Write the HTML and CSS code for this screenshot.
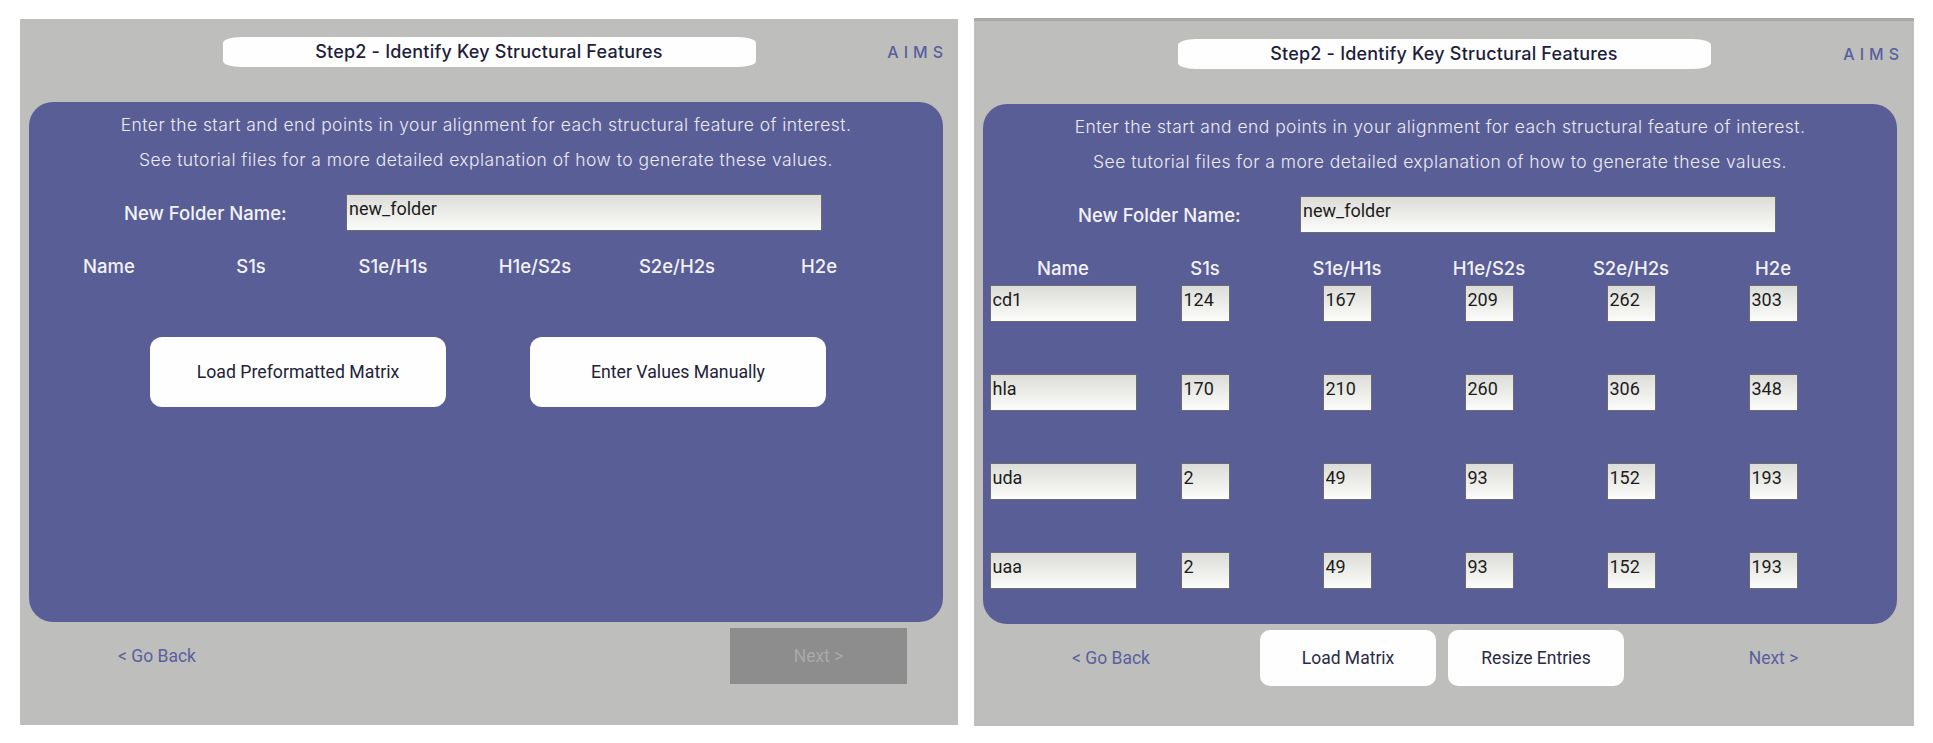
FILE: index.html
```html
<!DOCTYPE html>
<html lang="en">
  <head>
    <meta charset="UTF-8" />
    <meta name="viewport" content="width=device-width, initial-scale=1.0" />
    <title>AIMS - Step 2</title>
    <link rel="stylesheet" href="styles.css">
  </head>
  <body>
    <main class="screens">
      <!-- first state: nothing loaded yet -->
      <section class="screen">
        <header class="screen-top">
          <div class="step-title">Step2 - Identify Key Structural Features</div>
          <span class="brand">AIMS</span>
        </header>

        <div class="card">
          <p class="intro">Enter the start and end points in your alignment for each structural feature of interest.</p>
          <p class="intro">See tutorial files for a more detailed explanation of how to generate these values.</p>

          <div class="folder-row">
            <label for="folder1">New Folder Name:</label>
            <input class="field folder-field" type="text" id="folder1" value="new_folder" />
          </div>

          <div class="cols">
            <span>Name</span>
            <span>S1s</span>
            <span>S1e/H1s</span>
            <span>H1e/S2s</span>
            <span>S2e/H2s</span>
            <span>H2e</span>
          </div>

          <div class="choices">
            <button type="button" class="choice">Load Preformatted Matrix</button>
            <button type="button" class="choice">Enter Values Manually</button>
          </div>
        </div>

        <footer class="screen-foot">
          <a class="back-link" href="#">&lt; Go Back</a>
          <button type="button" class="next-btn" disabled>Next &gt;</button>
        </footer>
      </section>

      <!-- second state: matrix loaded -->
      <section class="screen screen-loaded">
        <header class="screen-top">
          <div class="step-title">Step2 - Identify Key Structural Features</div>
          <span class="brand">AIMS</span>
        </header>

        <div class="card">
          <p class="intro">Enter the start and end points in your alignment for each structural feature of interest.</p>
          <p class="intro">See tutorial files for a more detailed explanation of how to generate these values.</p>

          <div class="folder-row">
            <label for="folder2">New Folder Name:</label>
            <input class="field folder-field" type="text" id="folder2" value="new_folder" />
          </div>

          <div class="cols">
            <span>Name</span>
            <span>S1s</span>
            <span>S1e/H1s</span>
            <span>H1e/S2s</span>
            <span>S2e/H2s</span>
            <span>H2e</span>
          </div>

          <div class="rows">
            <input class="field name-field" type="text" value="cd1" />
            <input class="field num-field" type="text" value="124" />
            <input class="field num-field" type="text" value="167" />
            <input class="field num-field" type="text" value="209" />
            <input class="field num-field" type="text" value="262" />
            <input class="field num-field" type="text" value="303" />

            <input class="field name-field" type="text" value="hla" />
            <input class="field num-field" type="text" value="170" />
            <input class="field num-field" type="text" value="210" />
            <input class="field num-field" type="text" value="260" />
            <input class="field num-field" type="text" value="306" />
            <input class="field num-field" type="text" value="348" />

            <input class="field name-field" type="text" value="uda" />
            <input class="field num-field" type="text" value="2" />
            <input class="field num-field" type="text" value="49" />
            <input class="field num-field" type="text" value="93" />
            <input class="field num-field" type="text" value="152" />
            <input class="field num-field" type="text" value="193" />

            <input class="field name-field" type="text" value="uaa" />
            <input class="field num-field" type="text" value="2" />
            <input class="field num-field" type="text" value="49" />
            <input class="field num-field" type="text" value="93" />
            <input class="field num-field" type="text" value="152" />
            <input class="field num-field" type="text" value="193" />
          </div>
        </div>

        <footer class="screen-foot">
          <a class="back-link" href="#">&lt; Go Back</a>
          <button type="button" class="foot-btn">Load Matrix</button>
          <button type="button" class="foot-btn">Resize Entries</button>
          <a class="next-link" href="#">Next &gt;</a>
        </footer>
      </section>
    </main>
  </body>
</html>
```

FILE: styles.css
```css
body {
  margin: 0;
  background: #ffffff;
  font-family: Inter, "Liberation Sans", sans-serif;
}
.screens {
  display: flex;
  align-items: flex-start;
  gap: 16px;
  padding: 19px 0 0 20px;
}
.screen {
  width: 938px;
  height: 706px;
  background-color: #bebebc;
  box-sizing: border-box;
}
.screen-loaded {
  width: 940px;
  height: 708px;
  margin-top: -1px;
  border-top: 3px solid #aaaaa8;
}
.screen-top {
  display: grid;
  grid-template-columns: 1fr 533px 1fr;
  align-items: center;
  padding-top: 18px;
  height: 30px;
}
.step-title {
  grid-column: 2;
  height: 30px;
  line-height: 30px;
  background: #fefefe;
  border-radius: 18px / 6px;
  text-align: center;
  color: #1e1e3c;
  font-size: 18px;
  font-weight: 500;
  letter-spacing: 0.2px;
}
.brand {
  justify-self: end;
  padding-right: 15px;
  color: #5a5e9e;
  font-size: 16px;
  font-weight: 500;
  letter-spacing: 5px;
  margin-right: -5px;
}
.card {
  margin: 35px 0 0 9px;
  width: 914px;
  height: 520px;
  box-sizing: border-box;
  padding-top: 5px;
  background-color: #5a5e96;
  border-radius: 24px;
}
.intro {
  margin: 0;
  line-height: 35px;
  text-align: center;
  color: #ecebf2;
  font-size: 17.5px;
  font-weight: 300;
  letter-spacing: 0.45px;
}
.folder-row {
  display: flex;
  align-items: center;
  margin-top: 17px;
  padding-left: 95px;
}
.folder-row label {
  width: 222px;
  color: #f2f2f6;
  font-size: 18.5px;
  font-weight: 500;
}
.field {
  height: 37px;
  box-sizing: border-box;
  margin: 0;
  padding: 3px 2px 11px;
  border: 1px solid #6c6c70;
  border-radius: 0;
  background: linear-gradient(#dcdcd8, #fcfcfa);
  color: #1c1c1c;
  font-family: Roboto, "Liberation Sans", sans-serif;
  font-size: 18px;
}
.folder-field {
  width: 476px;
}
.cols,
.rows {
  display: grid;
  grid-template-columns: repeat(6, 142px);
  justify-items: center;
  padding-left: 9px;
}
.cols {
  margin-top: 24px;
  line-height: 22px;
  color: #f2f2f6;
  font-size: 18.5px;
  font-weight: 500;
}
.rows {
  margin-top: 6px;
  row-gap: 52px;
}
.name-field {
  width: 147px;
  margin: 0 -2.5px;
}
.num-field {
  width: 49px;
}
.choices {
  display: flex;
  gap: 84px;
  margin-top: 60px;
  padding-left: 121px;
}
.choice {
  width: 296px;
  height: 70px;
  border: none;
  border-radius: 12px;
  background: #fefefe;
  color: #222238;
  font-family: Roboto, "Liberation Sans", sans-serif;
  font-size: 17.7px;
}
.screen-foot {
  display: grid;
  grid-template-columns: 274px 176px 176px 1fr;
  column-gap: 12px;
  align-items: center;
  height: 56px;
  margin-top: 6px;
  padding-right: 3px;
  font-family: Roboto, "Liberation Sans", sans-serif;
  font-size: 17.5px;
}
.back-link,
.next-link {
  justify-self: center;
  color: #5b5f9f;
  text-decoration: none;
}
.next-link {
  grid-column: 4;
}
.next-btn {
  grid-column: 4;
  justify-self: center;
  width: 177px;
  height: 56px;
  border: none;
  background: #8c8d8c;
  color: #a9aaa9;
  font-family: inherit;
  font-size: 17.5px;
}
.foot-btn {
  height: 56px;
  border: none;
  border-radius: 10px;
  background: #fefefe;
  color: #2a2a44;
  font-family: inherit;
  font-size: 17.5px;
}
```
